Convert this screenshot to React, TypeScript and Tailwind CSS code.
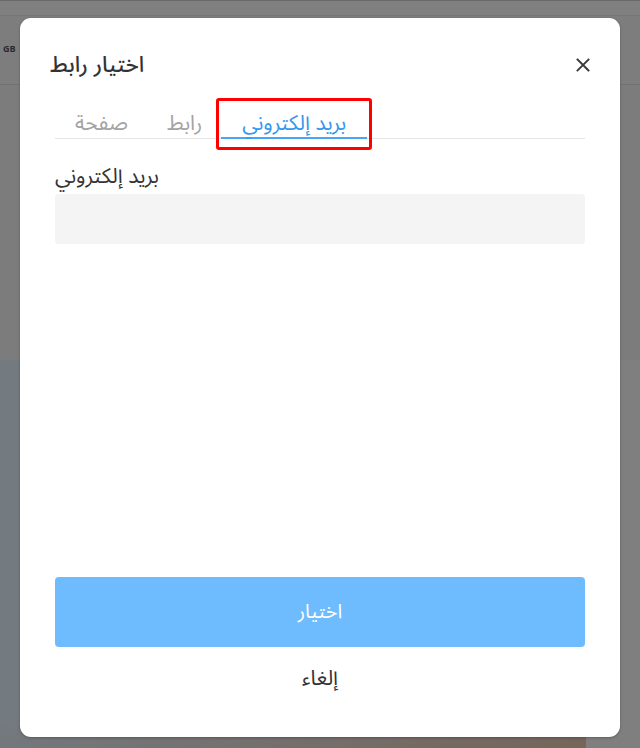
import React from "react";

const font = { fontFamily: '"Noto Sans Arabic", "DejaVu Sans", "Noto Sans", sans-serif' };

function CloseIcon() {
  return (
    <svg width="14" height="14" viewBox="0 0 14 14" fill="none" stroke="#3a3a3a" strokeWidth="1.9" strokeLinecap="square">
      <path d="M1.5 1.5 L12.5 12.5 M12.5 1.5 L1.5 12.5" />
    </svg>
  );
}

export default function App() {
  return (
    <div className="relative w-[640px] h-[748px] overflow-hidden bg-[#7f7f7f]" style={font}>
      {/* backdrop page (already dimmed) */}
      <div className="flex flex-col h-full">
        <div className="h-px bg-[#6a6a6a]" />
        <div className="h-[15px] bg-[#808080] border-b border-[#767676]" />
        <div className="h-[69px] flex items-center bg-[#7d7d7d] border-b border-[#727272] px-[3px]">
          <span className="text-[9px] font-bold text-[#2b2b2b]">GB</span>
        </div>
        <div className="h-[275px] bg-[#7c7c7c]" />
        <div className="flex flex-1">
          <div className="w-[586px] bg-[linear-gradient(160deg,#737a80_0%,#737a80_60%,#75655a_100%)]" />
          <div className="flex-1 bg-[#7f7f7f]" />
        </div>
      </div>

      {/* dialog */}
      <div className="absolute left-[20px] top-[18px] w-[600px] h-[719px] bg-white rounded-[11px] shadow-[0_1px_3px_rgba(0,0,0,0.25)] flex flex-col px-[35px]">
        <div className="flex items-center justify-between pt-[33px] -ml-[5px] -mr-[5px]">
          <h2 className="text-[22px] leading-[28px] text-[#333333] font-medium">اختيار رابط</h2>
          <button className="w-[14px] h-[24px] flex items-center justify-center">
            <CloseIcon />
          </button>
        </div>

        <div className="mt-[31px] flex border-b border-[#e6e6e6]">
          <div className="px-[20px] text-[21px] leading-[26px] pb-[1px] text-[#a3a3a3] border-b-2 border-transparent -mb-px">صفحة</div>
          <div className="px-[19px] text-[21px] leading-[26px] pb-[1px] text-[#a3a3a3] border-b-2 border-transparent -mb-px">رابط</div>
          <div className="relative px-[21px] text-[21px] leading-[26px] pb-[1px] text-[#3598ee] border-b-2 border-[#47a6f6] -mb-px">
            بريد إلكتروني
            <div className="pointer-events-none absolute -left-[5px] -right-[5px] -top-[12px] -bottom-[13px] border-[3.5px] border-[#ff0000] rounded-[3px]" />
          </div>
        </div>

        <label className="mt-[24px] text-[21px] leading-[26px] text-[#333333]">بريد إلكتروني</label>
        <div className="mt-[5px] h-[50px] rounded-[4px] bg-[#f4f4f4]" />

        <div className="flex-1" />

        <button className="h-[70px] rounded-[4px] bg-[#6ebbfd] text-white text-[20px] leading-[26px]">اختيار</button>
        <div className="mt-[18px] text-center text-[21px] leading-[26px] text-[#333333]">إلغاء</div>
        <div className="h-[46px]" />
      </div>
    </div>
  );
}
